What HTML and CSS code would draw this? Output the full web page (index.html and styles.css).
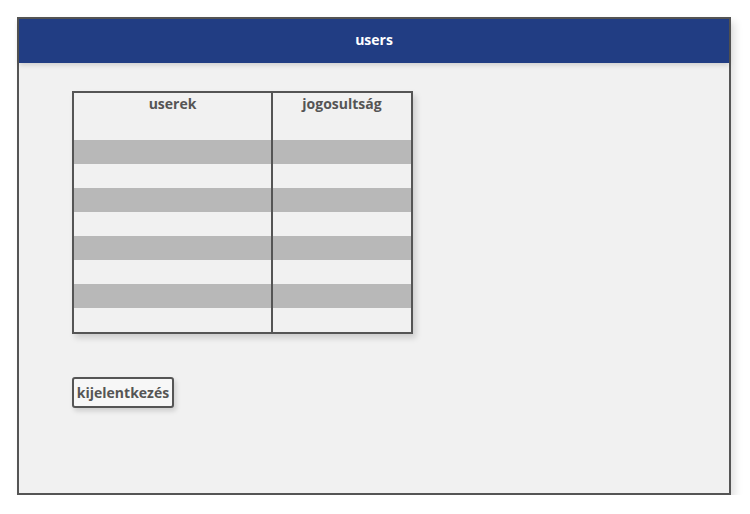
FILE: index.html
```html
<!DOCTYPE html>
<html>
<head>
<meta charset="utf-8">
<link rel="stylesheet" href="styles.css">
</head>
<body>
<div class="frame">
  <div class="header">users</div>
  <div class="content">
    <div class="grid">
      <div class="row head"><div class="c1">userek</div><div class="c2">jogosultság</div></div>
      <div class="row"><div class="c1"></div><div class="c2"></div></div>
      <div class="row alt"><div class="c1"></div><div class="c2"></div></div>
      <div class="row"><div class="c1"></div><div class="c2"></div></div>
      <div class="row alt"><div class="c1"></div><div class="c2"></div></div>
      <div class="row"><div class="c1"></div><div class="c2"></div></div>
      <div class="row alt"><div class="c1"></div><div class="c2"></div></div>
      <div class="row"><div class="c1"></div><div class="c2"></div></div>
      <div class="row alt"><div class="c1"></div><div class="c2"></div></div>
      <div class="row"><div class="c1"></div><div class="c2"></div></div>
    </div>
    <button class="logout">kijelentkezés</button>
  </div>
</div>
</body>
</html>
```
FILE: styles.css
```css
html, body {
  margin: 0;
  padding: 0;
  background: #ffffff;
}
body {
  font-family: "Open Sans", "DejaVu Sans", sans-serif;
  padding: 17px 0 0 17px;
}
.frame {
  box-sizing: border-box;
  width: 714px;
  height: 478px;
  border: 2px solid #555555;
  background: #f1f1f1;
  box-shadow: 4px 5px 8px rgba(0, 0, 0, 0.12);
  display: flex;
  flex-direction: column;
}
.header {
  box-sizing: border-box;
  height: 44px;
  padding-bottom: 3px;
  background: #213d83;
  color: #ffffff;
  font-weight: 700;
  font-size: 14px;
  display: flex;
  align-items: center;
  justify-content: center;
  box-shadow: 0 2px 5px rgba(0, 0, 0, 0.15);
  position: relative;
}
.content {
  padding: 28px 0 0 53px;
  display: flex;
  flex-direction: column;
  align-items: flex-start;
}
.grid {
  box-sizing: border-box;
  width: 341px;
  border: 2px solid #555555;
  display: flex;
  flex-direction: column;
  box-shadow: 3px 4px 6px rgba(0, 0, 0, 0.15);
}
.row {
  display: flex;
  height: 24px;
}
.row.head {
  height: 23px;
}
.row.alt {
  background: #b8b8b8;
}
.c1 {
  width: 197px;
  box-sizing: border-box;
}
.c2 {
  flex: 1;
  border-left: 2px solid #555555;
}
.head .c1, .head .c2 {
  box-sizing: border-box;
  padding-bottom: 2px;
  display: flex;
  align-items: center;
  justify-content: center;
  color: #555555;
  font-weight: 700;
  font-size: 14px;
}
.logout {
  margin-top: 43px;
  box-sizing: border-box;
  width: 102px;
  height: 31px;
  padding: 0;
  border: 2px solid #555555;
  border-radius: 3px;
  background: #f7f7f7;
  color: #555555;
  font-family: "Open Sans", "DejaVu Sans", sans-serif;
  font-weight: 700;
  font-size: 14px;
  box-shadow: 2px 3px 5px rgba(0, 0, 0, 0.15);
}
```
